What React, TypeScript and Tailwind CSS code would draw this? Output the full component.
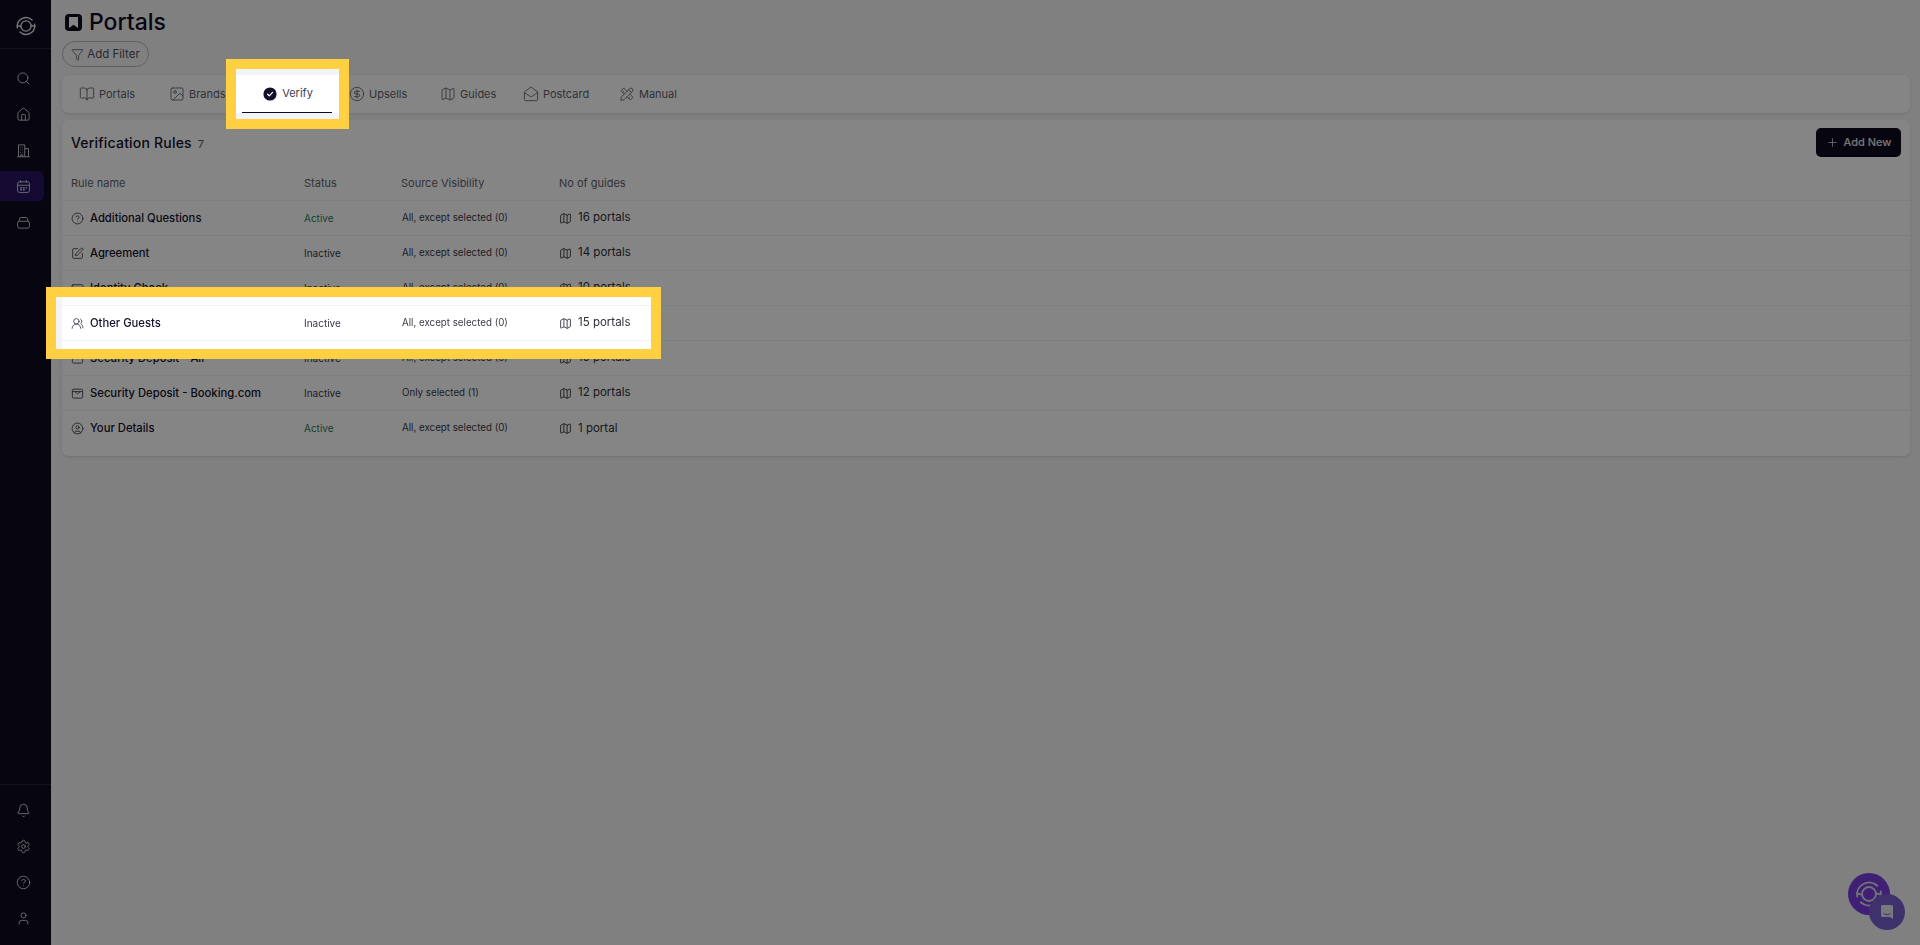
import { Bell, BookOpen, CircleDollarSign, CircleHelp, CircleUser, CreditCard, Filter, Home, Image, MailOpen, Map as MapIcon, Plus, Search, Settings, SquarePen, User, UsersRound } from "lucide-react";
import { TbTools } from "react-icons/tb";

type IconProps = { className?: string; strokeWidth?: number };

const Logo = ({ className }: { className: string }) => (
  <svg viewBox="0 0 24 24" fill="none" stroke="currentColor" strokeWidth="1.5" strokeLinecap="round" className={className}>
    <path d="M2.6 14a9.6 9.6 0 0 1 16-8.6" />
    <path d="M21.4 10a9.6 9.6 0 0 1-16 8.6" />
    <circle cx="12" cy="12" r="5.6" />
    <path d="M17.6 11.5l4 .9M6.4 12.5l-4-.9" />
  </svg>
);

const BuildingIcon = ({ className, strokeWidth }: IconProps) => (
  <svg viewBox="0 0 24 24" fill="none" stroke="currentColor" strokeWidth={strokeWidth} className={className}>
    <path d="M2 22h20M4 22V3h10v19M14 9h6v13M7 7h1M10 7h1M7 11h1M10 11h1M7 15h1M10 15h1M7 22v-3h4v3" />
  </svg>
);

const CalendarIcon = ({ className, strokeWidth }: IconProps) => (
  <svg viewBox="0 0 24 24" fill="none" stroke="currentColor" strokeWidth={strokeWidth} className={className}>
    <rect x="2.5" y="4.5" width="19" height="17" rx="3" />
    <path d="M2.5 10h19M7.5 2v4M16.5 2v4" />
    <path d="M6.5 14h3M11 14h3M15.5 14h2M6.5 17.5h3M11 17.5h3" strokeWidth="2" />
  </svg>
);

const BoxIcon = ({ className, strokeWidth }: IconProps) => (
  <svg viewBox="0 0 24 24" fill="none" stroke="currentColor" strokeWidth={strokeWidth} strokeLinejoin="round" className={className}>
    <rect x="2.5" y="10" width="19" height="11" rx="3" />
    <path d="M4.5 10l1.6-4.6A2 2 0 0 1 8 4h8a2 2 0 0 1 1.9 1.4L19.5 10" />
  </svg>
);

const DepositIcon = ({ className, strokeWidth }: IconProps) => (
  <svg viewBox="0 0 24 24" fill="none" stroke="currentColor" strokeWidth={strokeWidth} strokeLinejoin="round" className={className}>
    <rect x="2.5" y="4" width="19" height="16.5" rx="2.5" />
    <path d="M2.5 8.5h19M7 8.5l5 4 5-4" />
  </svg>
);

const rules = [
  { name: "Additional Questions", icon: CircleHelp, status: "Active", source: "All, except selected (0)", count: "16 portals" },
  { name: "Agreement", icon: SquarePen, status: "Inactive", source: "All, except selected (0)", count: "14 portals" },
  { name: "Identity Check", icon: CreditCard, status: "Inactive", source: "All, except selected (0)", count: "10 portals" },
  { name: "Other Guests", icon: UsersRound, status: "Inactive", source: "All, except selected (0)", count: "15 portals", focus: true },
  { name: "Security Deposit - All", icon: DepositIcon, status: "Inactive", source: "All, except selected (0)", count: "15 portals" },
  { name: "Security Deposit - Booking.com", icon: DepositIcon, status: "Inactive", source: "Only selected (1)", count: "12 portals" },
  { name: "Your Details", icon: CircleUser, status: "Active", source: "All, except selected (0)", count: "1 portal" },
];

const Tab = ({ icon: Icon, label, className }: { icon: any; label: string; className: string }) => (
  <div className={`flex items-center gap-[4px] text-[11px] text-[#5f5f6b] ${className}`}>
    <Icon className="h-[16px] w-[16px]" strokeWidth={1.3} />
    <span>{label}</span>
  </div>
);

const RuleRow = ({ rule }: { rule: (typeof rules)[number] }) => {
  const Icon = rule.icon;
  const cells = (
    <div className="relative grid h-full grid-cols-[233px_97px_158px_1fr] items-center pl-[9px]">
      <div className="flex items-center gap-[6px] text-[11.25px] font-[450] text-[#14122a]">
        <Icon className="h-[13px] w-[13px] text-[#3f3f4a]" strokeWidth={1.6} />
        {rule.name}
      </div>
      <div className={`text-[10px] ${rule.status === "Active" ? "text-[#2f7a50]" : "text-[#3a3a48]"}`}>{rule.status}</div>
      <div className="pl-px text-[9.75px] text-[#3a3a48]">{rule.source}</div>
      <div className="flex items-center gap-[6px] text-[11.5px] text-[#2f2f3a]">
        <MapIcon className="h-[13px] w-[13px] text-[#2f2f3a]" strokeWidth={1.6} />
        {rule.count}
      </div>
    </div>
  );
  return (
    <div className="h-[35px] border-b border-[#f0f1f4] last:border-b-0">
      {rule.focus ? (
        <div className="relative z-20 h-full">
          {/* cut-out in the dim layer, sits behind the row's cells */}
          <div className="absolute -top-[19px] -left-[16px] h-[72px] w-[615px] border-[10px] border-[#ffd042] bg-[#f3f4f8]">
            <div className="ml-[6px] h-full bg-white">
              <div className="h-[9px] border-b border-[#f0f1f4]" />
              <div className="h-[35px] border-b border-[#f0f1f4]" />
            </div>
          </div>
          {cells}
        </div>
      ) : (
        cells
      )}
    </div>
  );
};

export default function App() {
  const top = [Search, Home, BuildingIcon, CalendarIcon, BoxIcon];
  const bottom = [Bell, Settings, CircleHelp, User];
  return (
    <div className="flex h-[945px] w-[1920px] overflow-hidden bg-[#f5f5f5] font-['Inter',sans-serif]">
      <aside className="flex w-[51px] shrink-0 flex-col bg-[#0f0b1e] text-[#dcdce0]">
        <div className="flex h-[49px] items-center justify-center border-b border-[#241f38] pt-[3px]">
          <Logo className="h-[22px] w-[22px] text-[#e6e6ea]" />
        </div>
        <div className="mt-[14px] flex flex-col gap-[6px]">
          {top.map((Icon, i) => (
            <div key={i} className={`flex h-[30px] w-[44px] items-center justify-center ${i === 3 ? "rounded-r-[6px] bg-[#2a1460]" : ""}`}>
              <Icon className="ml-[2px] h-[15px] w-[15px]" strokeWidth={1.4} />
            </div>
          ))}
        </div>
        <div className="mt-auto flex h-[161px] flex-col border-t border-[#241f38] pt-[7px]">
          {bottom.map((Icon, i) => (
            <div key={i} className="flex h-[36px] w-[47px] items-center justify-center">
              <Icon className="h-[15px] w-[15px]" strokeWidth={1.4} />
            </div>
          ))}
        </div>
      </aside>

      <main className="flex min-w-0 flex-1 flex-col pr-[10px] pl-[11px]">
        <div className="flex h-[41px] items-center gap-[7px] pt-[4px] pl-[3px]">
          <span className="flex h-[17px] w-[17px] items-center justify-center rounded-[4px] bg-[#0f0b1e]">
            <svg viewBox="0 0 10 12" className="h-[11px] w-[9px] fill-white"><path d="M0 0h10v12L5 8.5 0 12z" /></svg>
          </span>
          <h1 className="text-[23px] leading-none font-medium text-[#0f0b1e]">Portals</h1>
        </div>
        <button className="flex h-[26px] w-[87px] items-center justify-center gap-[3px] rounded-full border border-[#b9b9c0] pt-px text-[11.5px] text-[#4d4d5a]">
          <Filter className="h-[13px] w-[13px]" strokeWidth={1.4} />
          Add Filter
        </button>

        <div className="mt-[8px] flex h-[38px] items-center rounded-[6px] bg-white shadow-sm">
          <Tab icon={BookOpen} label="Portals" className="ml-[17px] w-[90px]" />
          <Tab icon={Image} label="Brands" className="w-[73px]" />
          {/* highlighted tab stays above the dim layer */}
          <div className="relative z-20 h-full w-[90px] shrink-0 self-stretch">
            <div className="absolute -top-[16px] -left-[16px] h-[70px] w-[123px] border-[10px] border-[#ffd042] bg-[#f3f4f8]">
              <div className="mt-[6px] h-[38px] bg-white" />
            </div>
            <div className="relative flex h-full items-center justify-center gap-[5px] border-b border-[#0f0b1e] pl-[2px] text-[11px] text-[#3b3b55]">
              <svg viewBox="0 0 14 14" className="h-[14px] w-[14px]">
                <circle cx="7" cy="7" r="6.6" fill="#14102a" />
                <path d="M4.6 7.2l1.7 1.7 3.2-3.5" fill="none" stroke="#fff" strokeWidth="1.3" strokeLinecap="round" strokeLinejoin="round" />
              </svg>
              Verify
            </div>
          </div>
          <Tab icon={CircleDollarSign} label="Upsells" className="ml-[17px] w-[91px]" />
          <Tab icon={MapIcon} label="Guides" className="w-[83px]" />
          <Tab icon={MailOpen} label="Postcard" className="w-[96px]" />
          <Tab icon={TbTools} label="Manual" className="" />
        </div>

        <section className="mt-[7px] h-[336px] rounded-[6px] bg-white shadow-sm">
          <div className="flex h-[46px] items-center justify-between pr-[9px] pb-[2px] pl-[9px]">
            <div className="flex items-baseline gap-[6px]">
              <span className="text-[14px] font-medium tracking-[0.2px] text-[#14122a]">Verification Rules</span>
              <span className="text-[11px] text-[#55555f]">7</span>
            </div>
            <button className="flex h-[29px] w-[85px] items-center justify-center gap-[5px] rounded-[5px] bg-[#0f0b1e] text-[11px] font-medium text-[#e6e6ea]">
              <Plus className="h-[13px] w-[13px]" strokeWidth={1.4} />
              Add New
            </button>
          </div>
          <div className="grid h-[35px] grid-cols-[233px_97px_158px_1fr] items-center border-b border-[#f0f1f4] pl-[9px] text-[11px] text-[#5f5f6b]">
            <div>Rule name</div>
            <div>Status</div>
            <div>Source Visibility</div>
            <div>No of guides</div>
          </div>
          {rules.map((rule) => (
            <RuleRow key={rule.name} rule={rule} />
          ))}
        </section>
      </main>

      <div className="fixed inset-0 z-10 bg-black/48" />

      {/* chat launcher */}
      <div className="fixed right-[30px] bottom-[30px] z-0 flex h-[42px] w-[42px] items-center justify-center rounded-full bg-[#7a3fe0] text-[#d9d9e6]">
        <Logo className="h-[30px] w-[30px]" />
      </div>
      <div className="fixed right-[15px] bottom-[15px] z-0 flex h-[36px] w-[36px] items-center justify-center rounded-full bg-[#7a5fd0]">
        <svg viewBox="0 0 16 16" className="h-[16px] w-[16px]"><path d="M2 2.5A1.5 1.5 0 0 1 3.5 1h9A1.5 1.5 0 0 1 14 2.5V15l-3-2H3.5A1.5 1.5 0 0 1 2 11.5z" fill="#e8e8f0" /><path d="M4.5 9.5c2 1.3 5 1.3 7 0" stroke="#7a5fd0" fill="none" /></svg>
      </div>
    </div>
  );
}
